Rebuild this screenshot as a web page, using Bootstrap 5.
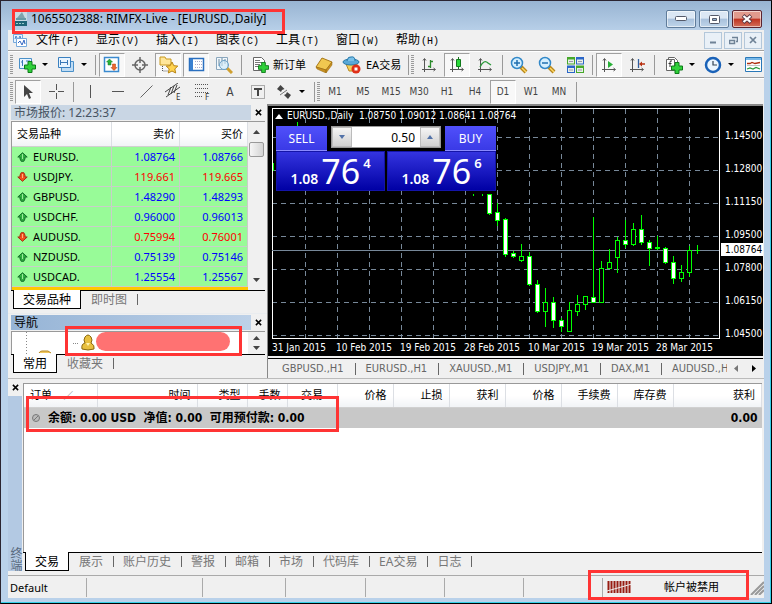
<!DOCTYPE html>
<html lang="zh-CN">
<head>
<meta charset="utf-8">
<meta name="viewport" content="width=device-width, initial-scale=1">
<title>1065502388: RIMFX-Live - [EURUSD.,Daily]</title>
<link href="https://cdn.jsdelivr.net/npm/bootstrap@5.3.0/dist/css/bootstrap.min.css" rel="stylesheet">
<style>
:root{--ui:"Noto Sans","Noto Sans CJK SC",sans-serif;--tah:"DejaVu Sans Condensed","Noto Sans","Noto Sans CJK SC",sans-serif}
body{font-family:var(--ui);font-size:11px;line-height:16px;color:#000;background:#b9d1ea}
button{font:inherit;color:inherit;border:0;background:none;padding:0}
svg{display:block;flex:none}
.win{min-height:100vh;border:1px solid #2a2430;border-right-color:#000;border-bottom-color:#000;background:#b9d1ea;padding:0 7px 5px 7px;box-shadow:inset -1px -1px #35d0e8}
.titlebar{height:29px;margin:0 -7px;padding:9px 9px 0 13px;background:linear-gradient(#98b4d2,#b7cfe8)}
.titlebar h1{font-size:12px;line-height:18px;margin:0;font-weight:400}
.cap{width:30px;height:18px;border:1px solid #5f7c9b;border-radius:2px;background:linear-gradient(#dbe7f4 45%,#a8c1dc 50%,#bfd5ea);box-shadow:inset 0 0 0 1px #ffffff90}
.cap.shut{background:linear-gradient(#e19a8c 45%,#bf3320 50%,#d2705c);border-color:#5b2430}
.mid{place-items:center}
.client{background:#f0f0f0}
.menubar{height:21px;padding-left:4px;border-bottom:1px solid #a0a0a0}
.menubar a{width:60px;font-size:12px;color:#000;text-decoration:none;white-space:nowrap}
.menubar kbd{font:10px "Liberation Mono",monospace;color:#000;background:none;padding:0;margin-left:1px}
.mdi{width:18px;height:17px;border:1px solid #b3c7da;background:#e9f0f7;margin-right:2px;color:#6f8296}
.tools{height:27px;padding-left:2px;border-top:1px solid #fff;border-bottom:1px solid #a0a0a0}
.tools.low{height:26px;border-bottom:0}
.grip{width:3px;height:20px;background:repeating-linear-gradient(#9a9a9a 0 1px,#f0f0f0 1px 2px);margin:0 1px 0 0;flex:none}
.tb{width:28px;height:24px;flex:none}
.on{border:1px solid #a0a0a0;border-right-color:#fff;border-bottom-color:#fff;background:#f8f8f8;margin:0 1px;width:26px}
.split{width:39px;height:24px;padding-left:4px;flex:none}
.split::after{content:"";border:3px solid transparent;border-top-color:#000;border-bottom:0;margin-left:6px}
.txtb{height:24px;white-space:nowrap;flex:none}
.sep{width:6px;height:20px;background:linear-gradient(#999,#999) center/1px 100% no-repeat;flex:none}
.tf{font-family:var(--tah);color:#444;font-size:10px}
.tf.big{font-size:12px}
.dock{width:260px;flex:none;border-right:1px solid #888}
.dockcap{height:15px;margin:1px 16px 0 3px;padding-left:3px;line-height:15px;font-size:12px;background:#c9d6e4;color:#475462;position:relative}
.dockcap.act{background:linear-gradient(90deg,#96b4d6,#bdd1e8);color:#000}
.shutx{position:absolute;right:-13px;top:0;width:12px;height:14px;display:grid;place-items:center}
.watch{border:1px solid #999;border-right:0;border-bottom:0;margin:1px 2px 0 3px;background:#fff}
table.quotes,table.orders{--bs-table-bg:transparent;margin:0;table-layout:fixed;font-size:11px;color:#000;border-color:#d8bfd8}
.quotes th,.orders th{font-weight:400;background:linear-gradient(#fff 50%,#f1f3f6);border-right:1px solid #dcdfe4;border-bottom:1px solid #d0d0d0;white-space:nowrap}
.quotes th{height:24px;vertical-align:middle}
.quotes td{height:20px;background:#98fb98!important;border-right:1px solid #c8cfc8;border-bottom:1px solid #c8cfc8;line-height:17px}
.table.quotes>:not(caption)>*>*{padding:1px 4px 0 5px;box-shadow:none}
.quotes .sym svg{display:inline-block;vertical-align:-1px;margin-right:5px}
.up td+td{color:#00f}.dn td+td{color:#f00}
table.quotes .next td{height:4px;background:#ffc800!important;padding:0!important;border:0;line-height:0}
.scroll{width:17px;flex:none;background:#f0f0f0}
.thumb{width:15px;height:15px;border:1px solid #999;border-radius:2px;background:linear-gradient(90deg,#f6f6f6,#d4d4d4)}
.tabs{border-top:1px solid #000;margin:0 2px 0 3px;padding-left:2px;height:19px;font-size:12px;line-height:17px;color:#777}
.tabs button{padding:0 10px;white-space:nowrap;position:relative;height:17px}
.tabs button:not(.cur)::after{content:"";position:absolute;right:-1px;top:3px;height:11px;border-right:1px solid #666}
.tabs .cur{background:#fff;color:#000;border:1px solid #000;border-top:0;height:19px;margin-top:-1px;padding:0 9px}
.navbox{height:23px;border:1px solid #999;border-right:0;border-bottom:0;margin:1px 2px 0 3px;background:#fff}
.chartwrap{min-width:0;border-top:2px solid #888;margin-right:1px}
.chart{background:#000;color:#fff;font:10px/12px var(--tah);padding:2px 0 0 4px;height:250px;position:relative}
.plot{height:231px;border:1px solid #fff;border-left:0;min-width:0}
.plot svg{width:100%;height:100%}
.prices{width:43px;height:231px;padding-top:22px;position:relative;flex:none}
.prices span{display:block;height:33px;padding-left:5px}
.prices b{position:absolute;left:1px;right:0;top:135px;padding-left:4px;line-height:13px;font-weight:400;background:#fff;color:#000}
.dates{padding-top:3px}
.dates span{width:64px;flex:none;white-space:nowrap}
.ohlc{position:absolute;left:7px;top:4px;white-space:pre}
.deal{position:absolute;left:8px;top:20px;width:220px;height:64px;background:#000;font-family:var(--ui)}
.deal .hd,.deal .px{color:#fff}
.deal .hd{width:51px;height:25px;background:linear-gradient(#5050fb,#3a3ae6);font-size:12px;line-height:23px;border-bottom:1px solid #8a8aff}
.deal .px{height:40px;background:linear-gradient(#3434df,#0000a4);border:1px solid #1414a8;font-size:14px;line-height:16px;font-weight:600}
.deal .px big{font:400 34px/36px var(--ui);margin:0 3px}
.deal .px sup{font-size:13px;top:-16px}
.lot{width:110px;height:22px;background:#fff;border:1px solid #999}
.lot input{width:68px;border:0;text-align:right;font-size:12px;padding:0 5px;color:#000;min-width:0}
.lot button{width:20px;background:linear-gradient(#f5f5f5,#d0d0d0);border:1px solid #bbb}
.ctabs{height:20px;border-top:1px solid #000;margin-top:2px;padding-left:4px;font-family:var(--tah);font-size:11px;color:#666}
.ctabs .nm{border-right:1px solid #666;line-height:12px;padding:0 11px 0 10px;white-space:nowrap}
.ctabs .arr{padding:0 7px}
.term{min-height:190px;border-top:1px solid #bbb}
.spine{width:14px;margin-right:1px;flex:none}
.spine button{height:17px}
.spine span{background:#b3c9e3;color:#5a6b80;writing-mode:vertical-rl;font-size:12px;line-height:14px;text-align:right}
.ledger{border:1px solid #999;border-right:0;border-bottom:0;background:#fff;margin:4px 2px 0 0}
.table.orders>:not(caption)>*>*{padding:0 6px;box-shadow:none;text-align:right}
.table.orders>thead>tr>*{height:23px;vertical-align:middle}
.table.orders>thead>tr>.deals{text-align:center}
.table.orders>tbody>tr>*{height:21px;background:#c8c8c8;font:700 12px/16px var(--tah);vertical-align:middle;border:0;white-space:pre;padding:0 4px}
.table.orders>*>tr>.ll{text-align:left}
.status{height:23px;border-top:1px solid #aaa;font-size:11px}
.status>span{border-right:1px solid #aaa;height:19px;line-height:19px;flex:none}
.ring{position:absolute;border:3px solid #ff3434;pointer-events:none;z-index:5}
.r1{left:11px;top:8px;width:273px;height:25px}
.r2{left:57px;top:-5px;width:177px;height:30px}
.r3{left:2px;top:12px;width:313px;height:36px}
.r4{right:15px;top:-6px;width:161px;height:30px}
.blot{width:134px;height:19px;border-radius:10px;background:#ff7272}
</style>
<script src="https://cdn.jsdelivr.net/npm/bootstrap@5.3.0/dist/js/bootstrap.bundle.min.js"></script>
</head>
<body>
<svg width="0" height="0" class="position-absolute">
<symbol id="up" viewBox="0 0 11 10"><path d="M5.500.7 10.200 5H8v1.800L6.800 9.300H4.200L3 6.800V5H.8z" fill="#2fae3f" stroke="#13702a"/><path d="M5.500 2v5" stroke="#9be89b"/></symbol>
<symbol id="dn" viewBox="0 0 11 10"><path d="M5.500 9.300.8 5H3V3.200L4.200.7h2.600L8 3.200V5h2.200z" fill="#f2501f" stroke="#a82a12"/><path d="M5.500 2v4" stroke="#ffb080"/></symbol>
<symbol id="plus" viewBox="0 0 12 12"><path d="M4 .5h4V4h3.500v4H8v3.500H4V8H.5V4H4z" fill="#2fd03a" stroke="#0c7a18"/></symbol>
<symbol id="axes" viewBox="0 0 16 16"><path d="M3.500 2v13M1 12.500h13M2 3.500l1.500-2 1.500 2M12.500 11l2 1.500-2 1.500" fill="none" stroke="#555"/></symbol>
<symbol id="lens" viewBox="0 0 18 18"><path d="m11 11 5 5" stroke="#b8871a" stroke-width="4"/><path d="m12 12 4 4" stroke="#ffd968" stroke-width="1.500"/><circle cx="7" cy="7" r="5.500" fill="#d4efff" stroke="#3288c8" stroke-width="1.500"/></symbol>
<symbol id="x" viewBox="0 0 8 8"><path d="m1 1 6 6M7 1 1 7" stroke="currentColor" stroke-width="1.700"/></symbol>
</svg>
<div class="win d-flex flex-column position-relative">
<header class="titlebar d-flex align-items-start">
<svg width="13" height="16" viewBox="0 0 13 16"><path d="M0 0h13v16H0z" fill="#c9dbe4"/><path d="M3 8 8 2l3 6z" fill="#7fa3ad"/><path d="M2 9h10" fill="none" stroke="#6899a5" stroke-width="2"/><path d="M0 11h13v5H0z" fill="#1f6678"/><path d="M2 13.500h9" stroke="#9cc" stroke-dasharray="2 1"/></svg>
<h1 class="ms-1">1065502388: RIMFX-Live - [EURUSD.,Daily]</h1>
<div class="d-flex ms-auto" style="gap:3px">
<button class="cap mid d-grid" aria-label="最小化"><svg width="12" height="6"><rect x=".5" y=".5" width="11" height="4" rx="1" fill="#fff" stroke="#555a6a"/></svg></button>
<button class="cap mid d-grid" aria-label="最大化"><svg width="11" height="9"><rect x=".5" y=".5" width="10" height="8" rx="1" fill="#fff" stroke="#555a6a"/><path d="M3.500 3.500h4v2h-4z" fill="#8fb0d0" stroke="#555a6a"/></svg></button>
<button class="cap shut mid d-grid" aria-label="关闭"><svg width="12" height="10" viewBox="0 0 12 10"><path d="m2 1.500 8 7m0-7-8 7" stroke="#5a3844" stroke-width="4"/><path d="m2.500 2 7 6m0-6-7 6" stroke="#fff" stroke-width="2.300"/></svg></button>
</div>
<i class="ring r1"></i>
</header>
<main class="client flex-grow-1 d-flex flex-column">
<nav class="menubar d-flex align-items-center">
<svg class="me-2" width="16" height="15" viewBox="0 0 16 15"><path d="M1.500 1.500h9v8h-9z" fill="#e8f4ff" stroke="#77a9db"/><path d="M3 6l1-3 2 4 2-4 1 3" fill="none" stroke="#4c88cc"/><path d="M4.500 5.500h10v8h-10z" fill="#fff" stroke="#77a9db"/><path d="m6 10 2-2 2 4 2-5 1 4" fill="none" stroke="#3468c4"/></svg>
<a href="#">文件<kbd>(F)</kbd></a><a href="#">显示<kbd>(V)</kbd></a><a href="#">插入<kbd>(I)</kbd></a><a href="#">图表<kbd>(C)</kbd></a><a href="#">工具<kbd>(T)</kbd></a><a href="#">窗口<kbd>(W)</kbd></a><a href="#">帮助<kbd>(H)</kbd></a>
<div class="d-flex ms-auto">
<button class="mdi mid d-grid" aria-label="最小化窗口"><svg width="8" height="8"><path d="M1 6.500h6" stroke="#6f8296" stroke-width="2"/></svg></button>
<button class="mdi mid d-grid" aria-label="还原窗口"><svg width="9" height="9"><path d="M3 1.500h5.500v4H7M.5 4.500h5v3h-5z" fill="none" stroke="#6f8296" stroke-width="1.500"/></svg></button>
<button class="mdi mid d-grid" aria-label="关闭窗口"><svg width="8" height="8"><use href="#x"/></svg></button>
</div>
</nav>
<div class="tools d-flex align-items-center overflow-hidden">
<i class="grip"></i>
<button class="split d-flex align-items-center" aria-label="新图表"><svg width="18" height="18"><path d="M1.500 2.500h12v10h-12z" fill="#e8f4ff" stroke="#4a90c8"/><path d="M4.500 4v6M3 6h2M8 5h4" stroke="#3a78b8"/><use href="#plus" x="6" y="5" width="12" height="12"/></svg></button>
<button class="split d-flex align-items-center" aria-label="配置文件"><svg width="18" height="18"><path d="M4.500 5.500h12v10h-12z" fill="#c0dcf4" stroke="#4a90c8"/><path d="M1.500 1.500h12v10h-12z" fill="#e8f4ff" stroke="#3a80c0"/><path d="M3.500 4v5m7-5v5M4 6.500h7" stroke="#3a78b8"/></svg></button>
<i class="sep"></i>
<button class="tb on mid d-grid" aria-label="市场报价"><svg width="18" height="18"><path d="M1.500 1.500h14v14h-14z" fill="#fff" stroke="#3a8ad0" stroke-width="1.500"/><path d="m6.500 3 3 3H8v3H5V6H3.500z" fill="#2ab23a" stroke="#14782a" stroke-width=".5"/><path d="m11 14.500 3-3h-1.500V8h-3v3.500H8z" fill="#f0682c" stroke="#a83a12" stroke-width=".5"/></svg></button>
<button class="tb mid d-grid" aria-label="数据窗口"><svg width="16" height="16"><circle cx="8" cy="8" r="5" fill="none" stroke="#666" stroke-width="1.500"/><path d="M8 0v6M8 10v6M0 8h6M10 8h6" stroke="#666" stroke-width="1.500"/></svg></button>
<button class="tb on mid d-grid" aria-label="导航"><svg width="19" height="18"><path d="M1 1h5l1 2h5v6H1z" fill="#ffe69a" stroke="#c89a20"/><path d="M3.500 10v5H9" fill="none" stroke="#555" stroke-dasharray="1 1"/><path d="m13 6 1.800 3.700 4 .4-3 2.800.9 4.100L13 15l-3.700 2 .9-4.100-3-2.800 4-.4z" fill="#ffd350" stroke="#b88414"/></svg></button>
<button class="tb on mid d-grid" aria-label="终端"><svg width="17" height="16"><path d="M1.500 1.500h14v12h-14z" fill="#fff" stroke="#2a70c0" stroke-width="1.500"/><path d="M2 2h3v11H2z" fill="#3a80d0"/><path d="M7 4.500h7M7 7.500h7M7 10.500h7" stroke="#aac" stroke-dasharray="1 1"/></svg></button>
<button class="tb mid d-grid" aria-label="策略测试"><svg width="18" height="18"><path d="M1.500 1.500h11v12h-11z" fill="#f2f8fc" stroke="#8aa6bc"/><path d="M4 3v7M7 2v8M10 3v5" stroke="#6a8aa0"/><path d="m12 12 5 5" stroke="#d0a030" stroke-width="3"/><circle cx="9" cy="9" r="4.500" fill="#cfe8f8a0" stroke="#6aa0c8"/></svg></button>
<i class="sep"></i>
<button class="txtb d-flex align-items-center gap-1 px-1 ps-2"><svg width="17" height="18"><path d="M1.500 1.500h8l3 3v10h-11z" fill="#fff" stroke="#666"/><path d="M3 4.500h5M3 6.500h7M3 8.500h5M3 10.500h4" stroke="#777"/><use href="#plus" x="6" y="6" width="11" height="11"/></svg>新订单</button>
<button class="tb mid d-grid" aria-label="编辑器"><svg width="18" height="16"><path d="m1 10 6-9 10 4-6 8z" fill="#f0c850" stroke="#a87818"/><path d="m1 10 10 3v3L2 12zM11 13l6-8v3l-6 8z" fill="#c89020" stroke="#966810" stroke-width=".5"/></svg></button>
<button class="txtb d-flex align-items-center gap-1 px-1"><svg width="20" height="18"><path d="M4 8h11l-2 7H7z" fill="#f5cf58" stroke="#b88820"/><ellipse cx="9" cy="6" rx="8" ry="3" fill="#58a8d8" stroke="#2878a8"/><path d="M5 5q1-5 4-4 4-1 4 4" fill="#78c0e8" stroke="#2878a8"/><circle cx="14" cy="13" r="4.500" fill="#e03018"/><path d="M12.500 11.500h3v3h-3z" fill="#fff"/></svg>EA交易</button>
<i class="sep"></i><i class="grip"></i>
<button class="tb mid d-grid" aria-label="柱状图"><svg width="16" height="16"><use href="#axes"/><path d="M9.500 3v8M7 9.500h2M10 4.500h2" stroke="#2a8a2a" stroke-width="1.300"/></svg></button>
<button class="tb on mid d-grid" aria-label="蜡烛图"><svg width="16" height="16"><use href="#axes"/><path d="M9.500 0v12" stroke="#18701f"/><path d="M7.500 2.500h4v7h-4z" fill="#28d838" stroke="#127a1c"/></svg></button>
<button class="tb mid d-grid" aria-label="折线图"><svg width="16" height="16"><use href="#axes"/><path d="M3 10q4-8 8-4l3 2" fill="none" stroke="#2a9a3a" stroke-width="1.300"/></svg></button>
<i class="sep"></i>
<button class="tb mid d-grid" aria-label="放大"><svg width="18" height="18"><use href="#lens"/><path d="M4 7h6M7 4v6" stroke="#2070b0" stroke-width="1.500"/></svg></button>
<button class="tb mid d-grid" aria-label="缩小"><svg width="18" height="18"><use href="#lens"/><path d="M4 7h6" stroke="#2070b0" stroke-width="1.500"/></svg></button>
<button class="tb mid d-grid" aria-label="平铺窗口"><svg width="17" height="16"><path d="M0 0h8v7.500H0zM9 8.500h8V16H9z" fill="#46a82a"/><path d="M9 0h8v7.500H9zM0 8.500h8V16H0z" fill="#2a66c8"/><path d="M1 2.500h6v4H1zM10 2.500h6v4h-6zM1 11h6v4H1zM10 11h6v4h-6z" fill="#e8f0e8"/><path d="M2 4.500h4M11 4.500h4M2 13h4M11 13h4" stroke="#99a"/></svg></button>
<i class="sep"></i>
<button class="tb on mid d-grid" aria-label="自动滚动"><svg width="16" height="16"><use href="#axes"/><path d="m7 4 5 3.500L7 11z" fill="#28b038"/></svg></button>
<button class="tb mid d-grid" aria-label="图表平移"><svg width="16" height="16"><use href="#axes"/><path d="M9.500 2v9" stroke="#3060a0" stroke-width="1.300"/><path d="M16 7h-4" stroke="#b83010" stroke-width="1.500"/><path d="m10 7 3-2.500v5z" fill="#b83010"/></svg></button>
<i class="sep"></i>
<button class="split d-flex align-items-center ms-1" aria-label="指标"><svg width="18" height="18"><path d="M3.500 3.500v-2h6l3 3v9h-3M1.500 3.500h8v11h-8z" fill="#fff" stroke="#666"/><path d="M7 5q-2-1-2 1.500V11M3.500 7.500h3" fill="none" stroke="#333"/><use href="#plus" x="6" y="6" width="12" height="12"/></svg></button>
<button class="split d-flex align-items-center" aria-label="时间周期"><svg width="18" height="18"><circle cx="9" cy="9" r="7" fill="#eaf6ff" stroke="#1a62b8" stroke-width="2.500"/><path d="M9 5v4h4" fill="none" stroke="#345" stroke-width="1.200"/></svg></button>
<button class="tb mid d-grid" aria-label="模板"><svg width="17" height="15"><path d="M.5.500h16v14H.5z" fill="#fff" stroke="#2a78b8"/><path d="M1 1h15v2H1z" fill="#78b8e8"/><path d="M2 6.500h3l2-1 3 1 5-1" fill="none" stroke="#b03010" stroke-width="1.300"/><path d="M2 8.500h13" stroke="#888" stroke-width=".5"/><path d="m2 12 3-1 3 1 3-1.500 4 1.500" fill="none" stroke="#2a9a3a" stroke-width="1.300"/></svg></button>
</div>
<div class="tools low d-flex align-items-center overflow-hidden">
<i class="grip"></i>
<button class="tb on mid d-grid" aria-label="光标"><svg width="12" height="16"><path d="M2 1v12l3-3 2 5 2-1-2-5h4z" fill="#444"/></svg></button>
<button class="tb mid d-grid" aria-label="十字准线"><svg width="15" height="15"><path d="M7.500 0v6m0 3v6M0 7.500h6m3 0h6" stroke="#555"/></svg></button>
<i class="sep"></i>
<button class="tb mid d-grid" aria-label="垂直线"><svg width="3" height="13"><path d="M1.500 0v13" stroke="#555"/></svg></button>
<button class="tb mid d-grid" aria-label="水平线"><svg width="12" height="3"><path d="M0 1.500h12" stroke="#555"/></svg></button>
<button class="tb mid d-grid" aria-label="趋势线"><svg width="13" height="13"><path d="M.5 12.500l12-12" stroke="#666"/></svg></button>
<button class="tb mid d-grid" aria-label="通道"><svg width="18" height="18"><path d="m0 9 13-9M1 14 15 4M3 12l3-8M6 11l3-8M9 10l3-8" stroke="#444"/><text x="11" y="17" font-size="8" fill="#333">E</text></svg></button>
<button class="tb mid d-grid" aria-label="斐波纳契"><svg width="18" height="18"><path d="M2 1.500h13M2 5.500h13M2 9.500h13M2 13.500h8" stroke="#555" stroke-dasharray="1 1"/><text x="12" y="17" font-size="8" fill="#333">F</text></svg></button>
<button class="tb tf big">A</button>
<button class="tb mid d-grid" aria-label="文本标签"><svg width="14" height="14"><path d="M.5.500h13v13H.5z" fill="none" stroke="#666" stroke-dasharray="1 1"/><path d="M3 4h8M7 4v7" stroke="#444" stroke-width="2"/></svg></button>
<button class="split d-flex align-items-center" aria-label="箭头"><svg width="17" height="16"><path d="m4.500 1 4 4-2.500 1-1 2-4-3zM12 15l-4-4 2-1 1-2 4 3z" fill="#444"/><path d="m4 11 7-5" stroke="#777"/></svg></button>
<i class="sep"></i><i class="grip"></i>
<button class="tb tf">M1</button><button class="tb tf">M5</button><button class="tb tf">M15</button><button class="tb tf">M30</button><button class="tb tf">H1</button><button class="tb tf">H4</button><button class="tb tf on">D1</button><button class="tb tf">W1</button><button class="tb tf">MN</button>
<i class="sep"></i>
</div>
<div class="d-flex">
<aside class="dock">
<section>
<div class="dockcap">市场报价: 12:23:37<button class="shutx text-black" aria-label="关闭市场报价"><svg width="7" height="7"><use href="#x"/></svg></button></div>
<div class="watch d-flex">
<table class="table quotes"><colgroup><col><col style="width:68px"><col style="width:68px"></colgroup>
<thead><tr><th>交易品种</th><th class="text-end">卖价</th><th class="text-end">买价</th></tr></thead>
<tbody>
<tr class="up"><td class="sym"><svg width="11" height="10"><use href="#up"/></svg>EURUSD.</td><td class="text-end">1.08764</td><td class="text-end">1.08766</td></tr>
<tr class="dn"><td class="sym"><svg width="11" height="10"><use href="#dn"/></svg>USDJPY.</td><td class="text-end">119.661</td><td class="text-end">119.665</td></tr>
<tr class="up"><td class="sym"><svg width="11" height="10"><use href="#up"/></svg>GBPUSD.</td><td class="text-end">1.48290</td><td class="text-end">1.48293</td></tr>
<tr class="up"><td class="sym"><svg width="11" height="10"><use href="#up"/></svg>USDCHF.</td><td class="text-end">0.96000</td><td class="text-end">0.96013</td></tr>
<tr class="dn"><td class="sym"><svg width="11" height="10"><use href="#dn"/></svg>AUDUSD.</td><td class="text-end">0.75994</td><td class="text-end">0.76001</td></tr>
<tr class="up"><td class="sym"><svg width="11" height="10"><use href="#up"/></svg>NZDUSD.</td><td class="text-end">0.75139</td><td class="text-end">0.75146</td></tr>
<tr class="up"><td class="sym"><svg width="11" height="10"><use href="#up"/></svg>USDCAD.</td><td class="text-end">1.25554</td><td class="text-end">1.25567</td></tr>
<tr class="next"><td colspan="3"></td></tr>
</tbody></table>
<div class="scroll d-flex flex-column align-items-center pb-1"><svg class="my-2" width="7" height="4"><path d="M0 4 3.500 0 7 4z" fill="#444"/></svg><i class="thumb"></i><svg class="mt-auto mb-1" width="7" height="4"><path d="M0 0h7L3.500 4z" fill="#444"/></svg></div>
</div>
<div class="tabs d-flex"><button class="cur">交易品种</button><button>即时图</button></div>
</section>
<section class="mt-1 border-top border-secondary-subtle">
<div class="dockcap act">导航<button class="shutx" aria-label="关闭导航"><svg width="7" height="7"><use href="#x"/></svg></button></div>
<div class="position-relative">
<div class="navbox d-flex">
<svg width="60" height="22"><path d="M14.500 0v22" stroke="#888" stroke-dasharray="1 2"/><path d="M27 21q1-2 3-2h6l3 2" fill="#f0c860" stroke="#b88820"/></svg>
<svg width="24" height="22"><path d="M-3 11.500h10" stroke="#888" stroke-dasharray="1 1"/><path d="M10 17q-1-5 3-6-2-3 0-6 3-4 6 0 2 3 0 6 4 2 3 6-6 2-12 0z" fill="#e8c040" stroke="#8a6810"/><path d="m14 11 2 3 2-3" fill="#fff3b0"/></svg>
<i class="blot"></i>
<div class="scroll d-flex flex-column align-items-center justify-content-between py-1 ms-auto"><svg width="7" height="4"><path d="M0 4 3.500 0 7 4z" fill="#444"/></svg><svg width="7" height="4"><path d="M0 0h7L3.500 4z" fill="#444"/></svg></div>
</div>
<i class="ring r2"></i>
</div>
<div class="tabs d-flex"><button class="cur">常用</button><button>收藏夹</button></div>
</section>
</aside>
<section class="chartwrap flex-grow-1">
<div class="chart">
<div class="d-flex">
<div class="plot flex-grow-1"><svg id="plot" viewBox="0 0 447 229" preserveAspectRatio="none" shape-rendering="crispEdges"></svg></div>
<div class="prices"><span>1.14500</span><span>1.12800</span><span>1.11150</span><span>1.09500</span><span>1.07800</span><span>1.06150</span><span>1.04500</span><b>1.08764</b></div>
</div>
<div class="dates d-flex overflow-hidden"><span>31 Jan 2015</span><span>10 Feb 2015</span><span>19 Feb 2015</span><span>28 Feb 2015</span><span>10 Mar 2015</span><span>19 Mar 2015</span><span>28 Mar 2015</span></div>
<div class="ohlc"><svg class="d-inline-block me-1" width="8" height="5"><path d="M0 5 4 0l4 5z" fill="#fff"/></svg>EURUSD.,Daily  1.08750 1.09012 1.08641 1.08764</div>
<div class="deal d-flex flex-column">
<div class="d-flex justify-content-between"><button class="hd">SELL</button>
<div class="lot d-flex"><button class="mid d-grid" aria-label="减少"><svg width="6" height="4"><path d="M0 0h6L3 4z" fill="#5272a8"/></svg></button><input class="flex-grow-1" aria-label="手数" value="0.50"><button class="mid d-grid" aria-label="增加"><svg width="6" height="4"><path d="M0 4h6L3 0z" fill="#5272a8"/></svg></button></div>
<button class="hd">BUY</button></div>
<div class="d-flex" style="gap:2px"><button class="px flex-fill">1.08<big>76</big><sup>4</sup></button><button class="px flex-fill">1.08<big>76</big><sup>6</sup></button></div>
</div>
</div>
<div class="ctabs d-flex align-items-center">
<div class="d-flex align-items-center overflow-hidden flex-grow-1" style="min-width:0"><button class="nm">GBPUSD.,H1</button><button class="nm">EURUSD.,H1</button><button class="nm">XAUUSD.,M1</button><button class="nm">USDJPY.,M1</button><button class="nm">DAX,M1</button><button class="nm">AUDUSD.,H1</button></div>
<button class="arr" aria-label="向左"><svg width="4" height="7"><path d="M4 0v7L0 3.500z" fill="#777"/></svg></button><button class="arr" aria-label="向右"><svg width="4" height="7"><path d="M0 0v7l4-3.500z" fill="#000"/></svg></button>
</div>
</section>
</div>
<section class="term flex-grow-1 d-flex">
<div class="spine d-flex flex-column"><button class="mid d-grid text-black" aria-label="关闭终端"><svg width="7" height="7"><use href="#x"/></svg></button><span class="flex-grow-1">终端</span></div>
<div class="flex-grow-1 d-flex flex-column">
<div class="ledger flex-grow-1 position-relative">
<table class="table orders"><colgroup><col style="width:73px"><col style="width:100px"><col style="width:50px"><col style="width:40px"><col style="width:50px"><col style="width:56px"><col style="width:56px"><col style="width:56px"><col style="width:56px"><col style="width:56px"><col style="width:56px"><col></colgroup>
<thead><tr><th class="ll">订单 &nbsp; &nbsp;<small class="text-secondary">∕</small></th><th>时间</th><th>类型</th><th>手数</th><th class="deals">交易</th><th>价格</th><th>止损</th><th>获利</th><th>价格</th><th>手续费</th><th>库存费</th><th>获利</th></tr></thead>
<tbody><tr><td class="ll" colspan="11"><svg class="d-inline-block me-2 ms-1" width="8" height="8"><circle cx="4" cy="4" r="3.500" fill="#bbb" stroke="#777"/><path d="m2 6 4-4" stroke="#777"/></svg>余额: 0.00 USD  净值: 0.00  可用预付款: 0.00</td><td>0.00</td></tr></tbody></table>
<i class="ring r3"></i>
</div>
<div class="tabs d-flex ms-0"><button class="cur">交易</button><button>展示</button><button>账户历史</button><button>警报</button><button>邮箱</button><button>市场</button><button>代码库</button><button>EA交易</button><button>日志</button></div>
</div>
</section>
<footer class="status d-flex align-items-center position-relative mt-1">
<span style="width:79px;padding-left:2px">Default</span><span style="width:116px"></span><span style="width:83px"></span><span style="width:80px"></span><span style="width:79px"></span><span style="width:79px"></span><span style="width:79px"></span>
<svg class="ms-1" width="25" height="14"><path d="M1.500 1v12M4.500 1v12M7.500 1v12M10.500 1v12M13.500 1v12M16.500 1v12M19.500 1v12M22.500 1v12" stroke="#971c12" stroke-width="2"/><path d="M0 11 25 4" stroke="#f0f0f0"/></svg>
<div class="flex-grow-1 ps-4 ms-2">帐户被禁用</div>
<svg width="14" height="16"><path d="M1 16 14 3M5 16l9-9M9 16l5-5" stroke="#999" stroke-width="2"/></svg>
<i class="ring r4"></i>
</footer>
</main>
</div>
<script>
// Plot area: grid every 32 x 33 units, then the candles as [x, high, low, top, bottom, filled]
const svg = document.getElementById('plot');
let out = '';
for (let x = 33; x < 447; x += 32) out += `<path d="M${x + .5} 0v229" stroke="#778899" stroke-dasharray="5 4"/>`;
for (let y = 28; y < 229; y += 33) out += `<path d="M0 ${y + .5}h447" stroke="#778899" stroke-dasharray="5 4"/>`;
out += '<path d="M.5 0v229" stroke="#fff"/><path d="M0 141.500h447" stroke="#778899"/>';
out += '<path d="M25.500 13v4M1.500 54v8M201.500 85v2M210.500 85v2" stroke="#0f0"/>';
const bars = [[217,85,106,85,104,1],[225,94,117,103,111,1],[233,109,148,110,145,1],[241,142,149,144,147,1],[249,135,153,147,151,0],
[257,143,177,147,175,1],[265,171,204,175,202,1],[273,179,218,193,202,0],[281,188,219,193,211,1],[289,209,223,211,217,1],
[297,193,222,201,222,0],[305,186,207,195,202,0],[313,187,201,187,195,0],[321,108,193,188,193,1],[329,152,193,159,193,0],
[337,140,159,153,159,0],[345,128,164,131,148,0],[353,111,139,131,135,1],[361,114,137,120,135,0],[369,106,136,120,133,1],
[377,131,157,133,139,1],[385,127,141,138,139,1],[393,138,155,139,153,1],[401,147,175,153,169,1],[409,156,173,163,169,0],
[417,137,168,141,163,0],[425,136,145,141,141,0]];
for (const [x, hi, lo, a, b, f] of bars)
  out += `<path d="M${x + .5} ${hi}V${lo}" stroke="#0f0"/><path d="M${x - 1.5} ${a + .5}h4V${b + .5}h-4z" fill="${f ? '#fff' : '#000'}" stroke="#0f0"/>`;
svg.innerHTML = out;
</script>
</body>
</html>
